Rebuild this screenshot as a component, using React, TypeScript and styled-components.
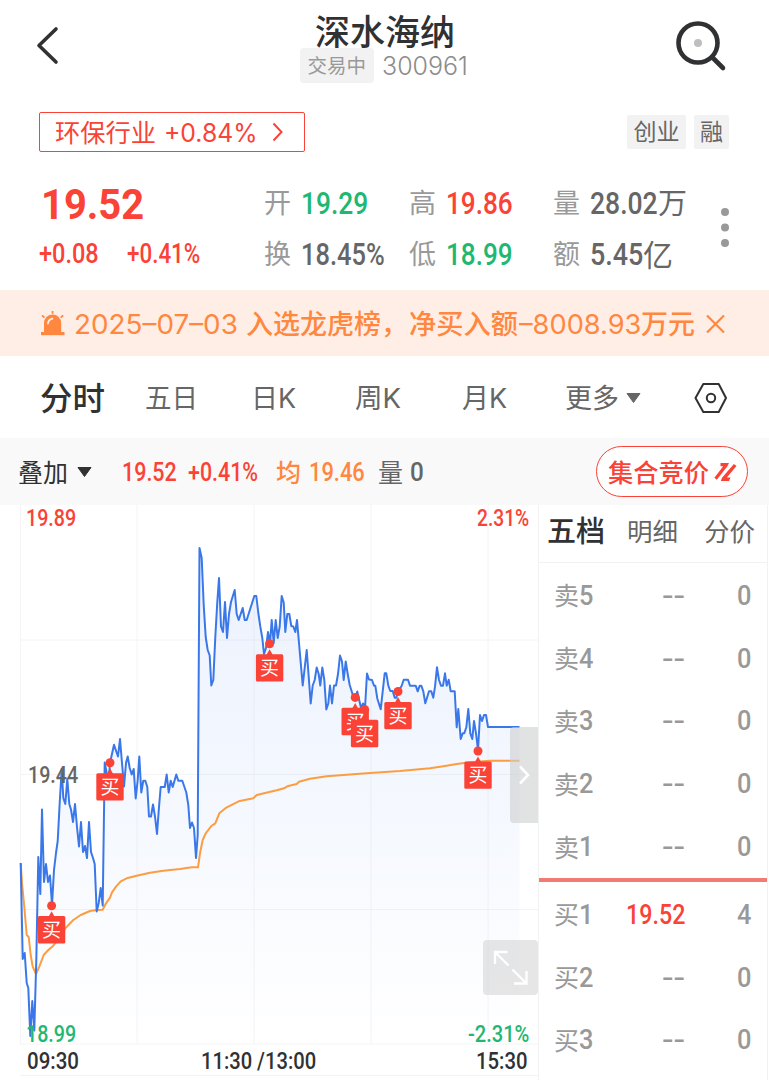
import React, { useLayoutEffect, useRef, useState } from 'react';
import styled, { createGlobalStyle } from 'styled-components';

const RED = '#fa4236';
const GREEN = '#1fb872';
const ORANGE = '#ff8740';
const INK = '#303133';
const GREY = '#666666';
const LIGHT = '#999999';

const GlobalStyle = createGlobalStyle`
  * { box-sizing: border-box; }
  body { margin: 0; background: #fff; }
`;

/* Squeezes a single line of text horizontally into a given width. */
type FitProps = { w: number; children: React.ReactNode; className?: string };
const FitBox = styled.span<{ $w: number }>`
  display: block;
  flex: none;
  width: ${(p) => p.$w}px;
  white-space: nowrap;
`;
const FitInner = styled.span`
  display: inline-block;
  vertical-align: top;
  transform-origin: 0 50%;
`;
function Fit({ w, children, className }: FitProps) {
  const ref = useRef<HTMLSpanElement>(null);
  const [scale, setScale] = useState(1);
  useLayoutEffect(() => {
    const measure = () => {
      if (ref.current) setScale(w / ref.current.offsetWidth);
    };
    measure();
    document.fonts?.ready.then(measure);
  }, [w]);
  return (
    <FitBox $w={w} className={className}>
      <FitInner ref={ref} style={{ transform: `scaleX(${scale})` }}>
        {children}
      </FitInner>
    </FitBox>
  );
}

const Num = styled(Fit)<{ $size: number; $color?: string; $weight?: number }>`
  font-family: Roboto, 'Noto Sans CJK SC', sans-serif;
  font-size: ${(p) => p.$size}px;
  line-height: ${(p) => Math.round(p.$size * 1.2)}px;
  font-weight: ${(p) => p.$weight ?? 500};
  color: ${(p) => p.$color ?? 'inherit'};
`;
const Txt = styled(Fit)<{ $size: number; $color?: string; $weight?: number }>`
  font-family: Inter, 'Noto Sans CJK SC', sans-serif;
  font-size: ${(p) => p.$size}px;
  line-height: 40px;
  font-weight: ${(p) => p.$weight ?? 400};
  color: ${(p) => p.$color ?? 'inherit'};
`;

const Page = styled.main`
  width: 769px;
  height: 1080px;
  overflow: hidden;
  background: #fff;
  font-family: Inter, 'Noto Sans CJK SC', sans-serif;
  display: flex;
  flex-direction: column;
`;

const Header = styled.header`
  height: 90px;
  flex: none;
  display: grid;
  grid-template-columns: 300px 170px 1fr;
`;
const HeaderLeft = styled.div`
  padding: 26px 0 0 36px;
`;
const HeaderTitle = styled.div`
  padding-top: 12px;
`;
const NameRow = styled.div`
  padding-left: 15px;
  height: 36px;
`;
const CodeRow = styled.div`
  display: flex;
  align-items: center;
  gap: 8px;
  height: 35px;
`;
const StatusBadge = styled.div`
  width: 74px;
  height: 35px;
  display: flex;
  align-items: center;
  justify-content: center;
  border-radius: 4px;
  background: #f2f2f2;
`;
const HeaderRight = styled.div`
  display: flex;
  justify-content: flex-end;
  padding: 19px 41px 0 0;
`;

const TagRow = styled.div`
  flex: none;
  height: 84px;
  padding: 22px 40px 0 39px;
  display: flex;
  gap: 8px;
`;
const IndustryLink = styled.div`
  width: 266px;
  height: 40px;
  margin-right: auto;
  border: 1.5px solid ${RED};
  border-radius: 2px;
  display: flex;
  align-items: center;
  padding: 1px 0 0 15px;
  gap: 8px;
  color: ${RED};
  svg { margin: 0 0 1px 7px; }
`;
const Tag = styled.div<{ $w: number }>`
  width: ${(p) => p.$w}px;
  height: 34px;
  margin-top: 3px;
  border-radius: 2px;
  background: #f2f2f2;
  display: flex;
  align-items: center;
  justify-content: center;
`;

const Quote = styled.section`
  flex: none;
  height: 116px;
  display: grid;
  grid-template-columns: 264px 145px 144px 159px 1fr;
`;
const QuotePrice = styled.div`
  padding: 4px 0 0 39px;
`;
const PriceRow = styled.div`
  padding-left: 2px;
`;
const ChangeRow = styled.div`
  display: flex;
  gap: 28px;
  margin-top: 8px;
`;
const StatColumn = styled.div`
  padding-top: 4px;
  display: grid;
  grid-template-rows: 51px 51px;
`;
const Stat = styled.div`
  display: grid;
  grid-template-columns: 37px auto 1fr;
  align-items: center;
  height: 51px;
  ${Num} { padding-bottom: 2px; }
`;
const MoreDots = styled.div`
  padding: 32px 0 0 8px;
`;

const Banner = styled.section`
  flex: none;
  height: 66px;
  background: #ffeee5;
  color: ${ORANGE};
  display: grid;
  align-items: center;
  grid-template-columns: 34px 172px 163px 110px 122px 64px 1fr;
  padding-left: 40px;
  padding-top: 4px;
  svg { margin-bottom: 2px; }
`;

const TabBar = styled.nav`
  flex: none;
  height: 82px;
  display: grid;
  align-items: center;
  grid-template-columns: 105px 106px 104px 107px 103px 61px 68px 1fr;
  padding: 4px 0 0 40px;
  color: ${GREY};
  svg { margin-bottom: 3px; }
`;

const InfoBar = styled.section`
  flex: none;
  height: 67px;
  background: #f9f9f9;
  display: grid;
  align-items: center;
  grid-template-columns: 59px 45px 66px 88px 33px 69px 32px 186px 152px;
  padding-left: 18px;
  ${Num}, ${Txt} { padding-top: 2px; }
`;
const AuctionPill = styled.div`
  width: 152px;
  height: 51px;
  border: 1px solid ${RED};
  border-radius: 26px;
  background: #fff;
  display: flex;
  align-items: center;
  padding-left: 11px;
  gap: 5px;
`;

const Body = styled.section`
  flex: 1;
  display: grid;
  grid-template-columns: 538px 230px;
  min-height: 0;
`;
const ChartArea = styled.div`
  position: relative;
  height: 575px;
`;
const Plot = styled.svg`
  display: block;
`;
const ChartLabel = styled.div<{ $x: number; $y: number }>`
  position: absolute;
  left: ${(p) => p.$x}px;
  top: ${(p) => p.$y}px;
`;
const SideHandle = styled.div`
  position: absolute;
  left: 510px;
  top: 222px;
  width: 28px;
  height: 96px;
  border-radius: 4px 0 0 4px;
  background: rgba(205, 206, 207, 0.6);
  display: flex;
  align-items: center;
  justify-content: center;
`;
const ExpandButton = styled.div`
  position: absolute;
  left: 483px;
  top: 435px;
  width: 55px;
  height: 55px;
  border-radius: 4px;
  background: rgba(214, 214, 214, 0.6);
`;

const Book = styled.aside`
  border: solid #f2f2f2;
  border-width: 0 1px;
`;
const BookTabs = styled.div`
  height: 58px;
  border-bottom: 1px solid #f2f2f2;
  display: grid;
  align-items: center;
  grid-template-columns: 80px 77px 1fr;
  padding: 0 0 3px 8px;
  color: ${GREY};
`;
const Rows = styled.div`
  display: grid;
  grid-auto-rows: 62.8px;
  padding-top: 1px;
`;
const BookRow = styled.div`
  display: grid;
  grid-template-columns: 25px 19px 87px 66px;
  align-items: center;
  padding-left: 15px;
  color: ${LIGHT};
  ${Num} { padding-top: 1px; }
  ${Txt} { padding-top: 2px; }
`;
const Divider = styled.div`
  height: 4px;
  background: #f27b73;
`;
const RightCell = styled.div`
  display: flex;
  justify-content: flex-end;
`;

const PRICE_POINTS: number[][] = [
  [20.7, 863], [22.7, 959], [24.7, 953], [26.7, 983], [28.3, 988], [30.3, 1036], [32.3, 1001], [34.3, 1030.5],
  [36.3, 960], [38.3, 857], [40.3, 894], [42, 809.5], [44, 882], [46, 864], [48, 882], [50, 875.5], [52, 905],
  [54, 870], [56, 853], [57.7, 841], [59.7, 803], [61.7, 769], [63.3, 798], [65.3, 804], [67.3, 779], [69.3, 804],
  [71, 809.5], [73, 822], [75, 804], [77, 827], [79, 846.5], [81, 822], [83, 852], [85, 846], [87, 858],
  [89, 822], [91, 852], [93, 858], [94.7, 864], [96.7, 911.5], [98.7, 903], [100.7, 888], [102.7, 905.5],
  [104.7, 762.5], [106.7, 773], [108.7, 780], [110, 763], [114, 744.7], [118, 756.5], [120, 739], [122, 763],
  [124, 786.5], [126, 763], [127.7, 756.5], [129.7, 768], [131.7, 774.5], [133.7, 769], [135.7, 798.5], [137.7, 780],
  [139.3, 756.5], [141.3, 792.5], [143.3, 780.7], [145.3, 780.7], [147.3, 787], [149, 816.5], [151, 816.5],
  [153, 804.5], [155, 816.5], [157, 834], [159, 807], [160.7, 787], [164.7, 787], [166.7, 774.5], [168.7, 792.5],
  [170.7, 780.7], [172.7, 787], [176.3, 774.5], [178.3, 780.7], [182.3, 780.7], [186.3, 792.5], [188.3, 805],
  [190, 828], [192, 822.5], [194, 828], [196, 858], [197.7, 835], [199.5, 548], [201.7, 558], [203.7, 605],
  [205.7, 637], [207.7, 650], [209.7, 655.5], [211.3, 685.5], [213.3, 680], [215.3, 637], [217.3, 602], [219, 578],
  [221, 626.5], [223, 632], [225, 602], [227, 638], [229, 614], [231, 602], [234.7, 590], [236.7, 614], [238.7, 620],
  [242.7, 608], [244.7, 620], [246.7, 620], [254.3, 596], [256.3, 596], [258.3, 613], [260.3, 626.5], [262.3, 638],
  [264, 654], [266, 648], [268, 632], [270, 644], [271.7, 620], [273.7, 643], [275.7, 620], [277.7, 638],
  [279.7, 626.5], [281.7, 596], [283.7, 602.5], [285.3, 632], [287.3, 614], [289.3, 614], [291.3, 626], [293.3, 626.5],
  [295.3, 632], [297, 620], [299, 643], [302.7, 685.5], [306.7, 650], [310.7, 703.5], [312.7, 685.5], [314.7, 680],
  [316.7, 667.5], [318.7, 674], [320.3, 685.5], [322.3, 667.5], [324.3, 680], [326.3, 709.5], [328.3, 703.5],
  [330, 685.5], [332, 703.5], [334, 685.5], [336, 685.5], [338, 674], [340, 655.5], [342, 661.5], [343.7, 680],
  [345.7, 661.5], [347.7, 674], [349.7, 685], [353.3, 696.5], [355.3, 697.3], [357.3, 691.5], [361, 708], [363, 703.5],
  [365, 708], [367, 673.5], [369, 679.5], [372, 680], [374, 685.7], [375.3, 685.7], [377.3, 698.5], [380.7, 709.3],
  [384.7, 673.3], [386.3, 673.3], [388.3, 685.7], [390.3, 691], [392.7, 691], [394.7, 697.7], [396.3, 697.7],
  [398, 691.5], [401.7, 685.7], [403.7, 679.7], [408, 679.7], [410, 685.7], [415.7, 685.7], [417.7, 691.3],
  [419.7, 685.7], [421.3, 685.7], [423.3, 691.3], [425.3, 703.3], [429, 691.3], [431.3, 691.3], [433.3, 697.7],
  [435, 686.7], [437, 667.3], [439, 680], [441, 685.7], [443, 685.7], [445, 673.3], [446.7, 685.7], [448.7, 679.7],
  [450.7, 691.3], [454.7, 691.3], [456.7, 727.3], [458.3, 709], [460.7, 739], [462.7, 733.3], [464.3, 733.3],
  [466.3, 727.3], [468.3, 709], [470.3, 733.3], [472.3, 739], [474, 721], [476, 733.3], [478, 750], [480, 715],
  [482, 721], [484, 715], [486, 715], [488, 727], [519.5, 727],
];

const AVERAGE_POINTS: number[][] = [
  [20.7, 863], [22, 883], [24.3, 907], [26.7, 935], [28.7, 937], [30.7, 955], [32.7, 966.7], [36, 974], [39.3, 966.7],
  [43.7, 955], [48.3, 950], [53.3, 945.7], [60, 936.7], [65.3, 928.3], [73.3, 920], [80.7, 915], [90, 911],
  [96.7, 910], [102.7, 909.7], [106, 903.3], [110, 897.7], [112, 892.3], [116, 886.7], [120.7, 881.3], [126.7, 878.3],
  [136.7, 875.7], [150, 872.7], [163.3, 870.7], [180, 869], [191.7, 867.3], [198, 867.3], [200, 853.3], [202.7, 840],
  [205.7, 833.3], [211.3, 826], [215.3, 823.3], [219.3, 813.3], [226.7, 807.3], [238.7, 801.3], [253.3, 798.3],
  [256.7, 795], [276.7, 790.3], [284, 788.3], [287.3, 786.3], [296.7, 784], [299, 781.7], [310, 778.7],
  [326.7, 776.3], [353.3, 774.3], [370, 773], [400, 771], [430, 768.3], [445, 766], [456.7, 764], [470, 762.3],
  [490, 760.8], [519.5, 760.8],
];

const TRADES: number[][] = [
  [51.6, 905.7], [110, 762.8], [269.6, 643.8], [355.2, 697.4], [364.6, 709.4], [398, 691.5], [478, 751],
];

const toPath = (points: number[][]) => 'M' + points.map(([x, y]) => `${x} ${y}`).join('L');

const CHART_LABELS = [
  { text: '19.89', x: 26, y: -1, w: 50, color: RED },
  { text: '2.31%', x: 477, y: -1, w: 52, color: RED },
  { text: '19.44', x: 28, y: 256, w: 50, color: GREY },
  { text: '18.99', x: 26, y: 515, w: 50, color: GREEN },
  { text: '-2.31%', x: 468, y: 515, w: 61, color: GREEN },
  { text: '09:30', x: 27, y: 542, w: 52, color: INK },
  { text: '11:30 /13:00', x: 201, y: 542, w: 115, color: INK },
  { text: '15:30', x: 476, y: 542, w: 51.5, color: INK },
];

function TimeChart() {
  return (
    <ChartArea>
      <Plot width="538" height="575" viewBox="0 505 538 575">
        <defs>
          <linearGradient id="area" x1="0" y1="548" x2="0" y2="1044" gradientUnits="userSpaceOnUse">
            <stop offset="0" stopColor="#3a78f0" stopOpacity="0.1" />
            <stop offset="0.5" stopColor="#3a78f0" stopOpacity="0.055" />
            <stop offset="1" stopColor="#3a78f0" stopOpacity="0" />
          </linearGradient>
        </defs>
        <path
          d="M20.5 505V1044M137 505V1044M254 505V1044M371 505V1044M488 505V1044M20 640H538M20 774.5H538M20 909.5H538M20 1044H538M20 1075.5H538"
          stroke="#f4f4f5"
          fill="none"
        />
        <path d={`${toPath(PRICE_POINTS)}V1044H20.7Z`} fill="url(#area)" />
        <path d={toPath(AVERAGE_POINTS)} fill="none" stroke="#fb9d40" strokeWidth="2" strokeLinejoin="round" />
        <path d={toPath(PRICE_POINTS)} fill="none" stroke="#3a78ea" strokeWidth="2" strokeLinejoin="round" />
        {TRADES.map(([x, y]) => (
          <g key={x} transform={`translate(${x} ${y})`}>
            <circle r="4.5" fill={RED} />
            <path d="M0 5.5L3.6 12H-3.6Z" fill={RED} />
            <rect x="-13.7" y="10.4" width="27.4" height="27.4" rx="1.5" fill={RED} />
            <text
              y="31.3"
              textAnchor="middle"
              fill="#fff"
              fontSize="19"
              fontFamily="'Noto Sans CJK SC', sans-serif"
            >
              买
            </text>
          </g>
        ))}
      </Plot>
      {CHART_LABELS.map((l) => (
        <ChartLabel key={l.text} $x={l.x} $y={l.y}>
          <Num w={l.w} $size={24} $color={l.color}>{l.text}</Num>
        </ChartLabel>
      ))}
      <SideHandle>
        <svg width="12" height="20" viewBox="0 0 12 20" fill="none" stroke="#fff" strokeWidth="2.6">
          <path d="M2 1.5L10 10L2 18.5" />
        </svg>
      </SideHandle>
      <ExpandButton>
        <svg width="55" height="55" viewBox="0 0 55 55" fill="none" stroke="#fff" strokeWidth="2.3">
          <path d="M12 24V12H24.5M12.5 12.5L25.5 25.5M43.5 31V43.5H31M43 43L29.5 29.5" />
        </svg>
      </ExpandButton>
    </ChartArea>
  );
}

type Order = { side: string; level: string; price: string; volume: string };
const ASKS: Order[] = ['5', '4', '3', '2', '1'].map((level) => ({ side: '卖', level, price: '--', volume: '0' }));
const BIDS: Order[] = [
  { side: '买', level: '1', price: '19.52', volume: '4' },
  { side: '买', level: '2', price: '--', volume: '0' },
  { side: '买', level: '3', price: '--', volume: '0' },
];

function OrderRow({ row }: { row: Order }) {
  const empty = row.price === '--';
  return (
    <BookRow>
      <Txt w={25} $size={25}>{row.side}</Txt>
      <Num w={14.5} $size={28}>{row.level}</Num>
      <RightCell>
        <Num w={empty ? 23 : 59} $size={28} $color={empty ? LIGHT : RED}>{row.price}</Num>
      </RightCell>
      <RightCell>
        <Num w={14.5} $size={28}>{row.volume}</Num>
      </RightCell>
    </BookRow>
  );
}

function Caret({ color }: { color: string }) {
  return (
    <svg width="15" height="10" viewBox="0 0 15 10">
      <path d="M1 0.5H14L7.5 9.5Z" fill={color} stroke={color} strokeLinejoin="round" />
    </svg>
  );
}

export default function App() {
  return (
    <Page>
      <GlobalStyle />
      <Header>
        <HeaderLeft>
          <svg width="24" height="40" viewBox="0 0 24 40" fill="none" stroke={INK} strokeWidth="3.6" strokeLinecap="round" strokeLinejoin="round">
            <path d="M20 3L3 19.5L20 36" />
          </svg>
        </HeaderLeft>
        <HeaderTitle>
          <NameRow><Txt w={140} $size={35} $weight={500} $color={INK}>深水海纳</Txt></NameRow>
          <CodeRow>
            <StatusBadge><Txt w={59} $size={19.5} $color={LIGHT}>交易中</Txt></StatusBadge>
            <Txt w={86} $size={25} $weight={300} $color="#8c8c8c">300961</Txt>
          </CodeRow>
        </HeaderTitle>
        <HeaderRight>
          <svg width="52" height="54" viewBox="0 0 52 54" fill="none">
            <circle cx="22" cy="24" r="19.5" stroke={INK} strokeWidth="4.6" />
            <circle cx="22" cy="24" r="4" fill="#bfbfbf" />
            <path d="M36 38L47 49" stroke={INK} strokeWidth="4.6" strokeLinecap="round" />
          </svg>
        </HeaderRight>
      </Header>

      <TagRow>
        <IndustryLink>
          <Txt w={101} $size={25}>环保行业</Txt>
          <Txt w={93} $size={25}>+0.84%</Txt>
          <svg width="12" height="20" viewBox="0 0 12 20" fill="none" stroke={RED} strokeWidth="2">
            <path d="M1.5 1.5L9.5 10L1.5 18.5" />
          </svg>
        </IndustryLink>
        <Tag $w={59}><Txt w={46} $size={23} $color={GREY}>创业</Txt></Tag>
        <Tag $w={35}><Txt w={23} $size={23} $color={GREY}>融</Txt></Tag>
      </TagRow>

      <Quote>
        <QuotePrice>
          <PriceRow><Num w={103} $size={43} $weight={700} $color={RED}>19.52</Num></PriceRow>
          <ChangeRow>
            <Num w={60} $size={27} $color={RED}>+0.08</Num>
            <Num w={73} $size={27} $color={RED}>+0.41%</Num>
          </ChangeRow>
        </QuotePrice>
        <StatColumn>
          <Stat><Txt w={27} $size={27} $color={LIGHT}>开</Txt><Num w={67.5} $size={32} $color={GREEN}>19.29</Num></Stat>
          <Stat><Txt w={27} $size={27} $color={LIGHT}>换</Txt><Num w={83.5} $size={32} $color={GREY}>18.45%</Num></Stat>
        </StatColumn>
        <StatColumn>
          <Stat><Txt w={27} $size={27} $color={LIGHT}>高</Txt><Num w={67} $size={32} $color={RED}>19.86</Num></Stat>
          <Stat><Txt w={27} $size={27} $color={LIGHT}>低</Txt><Num w={67} $size={32} $color={GREEN}>18.99</Num></Stat>
        </StatColumn>
        <StatColumn>
          <Stat><Txt w={27} $size={27} $color={LIGHT}>量</Txt><Num w={68} $size={32} $color={GREY}>28.02</Num><Txt w={29} $size={29} $color={GREY}>万</Txt></Stat>
          <Stat><Txt w={27} $size={27} $color={LIGHT}>额</Txt><Num w={53} $size={32} $color={GREY}>5.45</Num><Txt w={30} $size={30} $color={GREY}>亿</Txt></Stat>
        </StatColumn>
        <MoreDots>
          <svg width="10" height="42" viewBox="0 0 10 42" fill={LIGHT}>
            <circle cx="5" cy="6" r="4" /><circle cx="5" cy="21.5" r="4" /><circle cx="5" cy="37" r="4" />
          </svg>
        </MoreDots>
      </Quote>

      <Banner>
        <svg width="25" height="26" viewBox="0 0 25 26" fill={ORANGE}>
          <path d="M4 21V11.8A8.6 8.2 0 0 1 21.2 11.8V21Z" />
          <path d="M1 21H24.5V24.2H1Z" />
          <path d="M12.6 0V2.8M2 4.3L4.5 6.7M23.2 4.3L20.7 6.7" stroke={ORANGE} strokeWidth="1.8" />
          <path d="M8 12.5C8.2 10 10 8.2 12.4 7.6" fill="none" stroke="#ffeee5" strokeWidth="1.8" strokeLinecap="round" />
        </svg>
        <Txt w={164} $size={27}>2025–07–03</Txt>
        <Txt w={162} $size={27} $weight={500}>入选龙虎榜，</Txt>
        <Txt w={109} $size={27} $weight={500}>净买入额</Txt>
        <Txt w={122} $size={27}>–8008.93</Txt>
        <Txt w={54} $size={27} $weight={500}>万元</Txt>
        <svg width="22" height="20" viewBox="0 0 22 20" fill="none" stroke={ORANGE} strokeWidth="2.2">
          <path d="M2 1.5L19 18.5M19 1.5L2 18.5" />
        </svg>
      </Banner>

      <TabBar>
        <Txt w={65} $size={32} $weight={500} $color={INK}>分时</Txt>
        <Txt w={53} $size={27}>五日</Txt>
        <Txt w={45} $size={27}>日K</Txt>
        <Txt w={46} $size={27}>周K</Txt>
        <Txt w={45} $size={27}>月K</Txt>
        <Txt w={54} $size={27}>更多</Txt>
        <Caret color={GREY} />
        <svg width="34" height="32" viewBox="0 0 34 32" fill="none" stroke={INK} strokeWidth="2" strokeLinejoin="round">
          <path d="M9.3 2H24.7L32 16L24.7 30H9.3L1.5 16Z" />
          <circle cx="17" cy="16" r="4.2" />
        </svg>
      </TabBar>

      <InfoBar>
        <Txt w={50} $size={25} $color={INK}>叠加</Txt>
        <Caret color={INK} />
        <Num w={54.5} $size={26} $color={RED}>19.52</Num>
        <Num w={70} $size={26} $color={RED}>+0.41%</Num>
        <Txt w={25} $size={25} $weight={500} $color={ORANGE}>均</Txt>
        <Num w={55.5} $size={26} $color={ORANGE}>19.46</Num>
        <Txt w={25} $size={25} $color={GREY}>量</Txt>
        <Num w={14} $size={26} $color={GREY}>0</Num>
        <AuctionPill>
          <Txt w={101} $size={25} $weight={500} $color={RED}>集合竞价</Txt>
          <svg width="23" height="20" viewBox="0 0 23 20" fill={RED}>
            <path d="M6.5 1H15L13.4 4.2L2.8 17.8L0.4 15.8L9.2 4.2H6.5Z" />
            <path d="M19.9 2L22.5 4L12.8 15.6H16.5L15 19H6.8L8 15.8Z" />
          </svg>
        </AuctionPill>
      </InfoBar>

      <Body>
        <TimeChart />
        <Book>
          <BookTabs>
            <Txt w={58} $size={29} $weight={500} $color={INK}>五档</Txt>
            <Txt w={51} $size={25.5}>明细</Txt>
            <Txt w={51} $size={25.5}>分价</Txt>
          </BookTabs>
          <Rows>{ASKS.map((r) => <OrderRow key={r.level} row={r} />)}</Rows>
          <Divider />
          <Rows>{BIDS.map((r) => <OrderRow key={r.level} row={r} />)}</Rows>
        </Book>
      </Body>
    </Page>
  );
}
